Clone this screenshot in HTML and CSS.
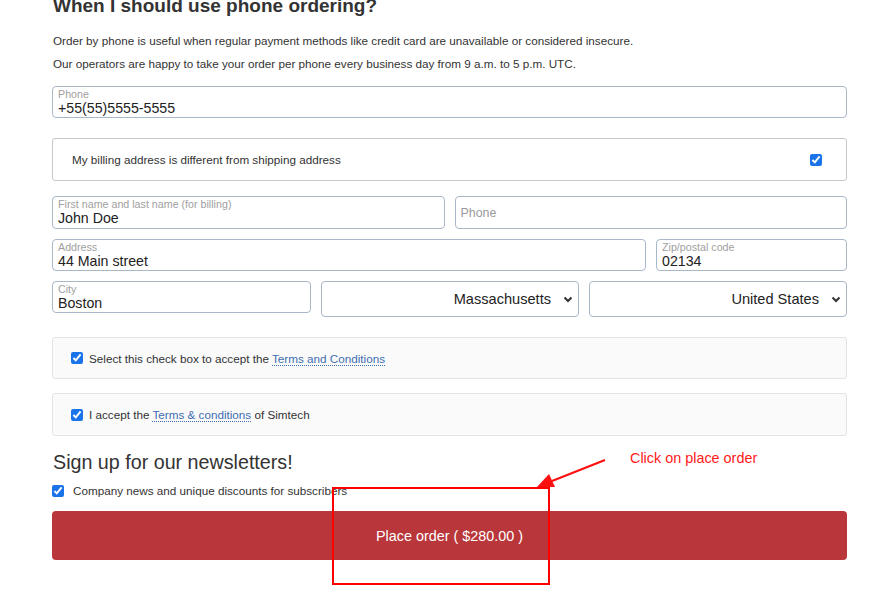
FILE: index.html
```html
<!DOCTYPE html>
<html>
<head>
<meta charset="utf-8">
<link rel="stylesheet" href="styles.css">
</head>
<body>
<div class="page">
  <h2 class="title">When I should use phone ordering?</h2>
  <p class="info first">Order by phone is useful when regular payment methods like credit card are unavailable or considered insecure.</p>
  <p class="info">Our operators are happy to take your order per phone every business day from 9 a.m. to 5 p.m. UTC.</p>

  <div class="field full">
    <span class="flabel">Phone</span>
    <span class="fvalue">+55(55)5555-5555</span>
  </div>

  <div class="billing">
    <span>My billing address is different from shipping address</span>
    <input type="checkbox" class="cb" checked>
  </div>

  <div class="row r1">
    <div class="field grow">
      <span class="flabel">First name and last name (for billing)</span>
      <span class="fvalue">John Doe</span>
    </div>
    <div class="field grow placeholder">
      <span>Phone</span>
    </div>
  </div>

  <div class="row r2">
    <div class="field address">
      <span class="flabel">Address</span>
      <span class="fvalue">44 Main street</span>
    </div>
    <div class="field zip">
      <span class="flabel">Zip/postal code</span>
      <span class="fvalue">02134</span>
    </div>
  </div>

  <div class="row r3">
    <div class="field city">
      <span class="flabel">City</span>
      <span class="fvalue">Boston</span>
    </div>
    <div class="select third">
      <span>Massachusetts</span>
      <svg width="10" height="7" viewBox="0 0 10 7"><path d="M1.5 1.5 L5 5 L8.5 1.5" fill="none" stroke="#333" stroke-width="2"/></svg>
    </div>
    <div class="select third">
      <span>United States</span>
      <svg width="10" height="7" viewBox="0 0 10 7"><path d="M1.5 1.5 L5 5 L8.5 1.5" fill="none" stroke="#333" stroke-width="2"/></svg>
    </div>
  </div>

  <div class="terms t1">
    <input type="checkbox" class="cb" checked>
    <span>Select this check box to accept the <a class="tlink">Terms and Conditions</a></span>
  </div>
  <div class="terms t2">
    <input type="checkbox" class="cb" checked>
    <span>I accept the <a class="tlink">Terms &amp; conditions</a> of Simtech</span>
  </div>

  <h3 class="news">Sign up for our newsletters!</h3>
  <div class="subscribe">
    <input type="checkbox" class="cb" checked>
    <span>Company news and unique discounts for subscribers</span>
  </div>

  <button class="order">Place order ( $280.00 )</button>
</div>

<div class="note">Click on place order</div>
<div class="highlight"></div>
<svg class="arrow" width="891" height="593" viewBox="0 0 891 593">
  <line x1="605" y1="460" x2="552" y2="481" stroke="#ff1010" stroke-width="2.2"/>
  <path d="M537 487 L549 474 L555 487 Z" fill="#ff1010"/>
</svg>
</body>
</html>
```

FILE: styles.css
```css
* { box-sizing: border-box; }
html, body { margin: 0; padding: 0; background: #fff; overflow: hidden; }
body {
  width: 891px;
  height: 593px;
  font-family: "Liberation Sans", Arial, sans-serif;
  color: #333;
  position: relative;
}
.page {
  margin-left: 52px;
  width: 795px;
}
.title {
  margin: -5px 0 0 1px;
  font-size: 19px;
  line-height: 22px;
  font-weight: bold;
  color: #333;
}
.info {
  margin: 8px 0 0 1px;
  font-size: 11.7px;
  line-height: 15px;
  color: #333;
}
.info.first { margin-top: 16px; }

.field {
  border: 1px solid #a9b8c9;
  border-radius: 4px;
  height: 32px;
  padding: 1px 4px 0 5px;
  display: flex;
  flex-direction: column;
  background: #fff;
}
.field.full { margin-top: 15px; }
.flabel {
  font-size: 10.7px;
  line-height: 12px;
  color: #a0a0a0;
}
.fvalue {
  font-size: 14.2px;
  line-height: 16px;
  color: #222;
}
.placeholder {
  justify-content: center;
  padding-top: 0;
  font-size: 12.4px;
  color: #9a9a9a;
}

.billing {
  margin-top: 20px;
  height: 43px;
  border: 1px solid #c8c8c8;
  border-radius: 3px;
  display: flex;
  align-items: center;
  justify-content: space-between;
  padding: 0 24px 0 19px;
  font-size: 11.7px;
  color: #333;
}
.cb {
  width: 12px;
  height: 12px;
  margin: 0;
  accent-color: #1a73e8;
  flex: none;
}

.row { display: flex; gap: 10px; margin-top: 10px; align-items: flex-start; }
.row.r1 { margin-top: 15px; }
.row.r1 .field { height: 33px; }
.grow { flex: 1 1 0; }
.address { flex: 1 1 0; }
.zip { width: 191px; flex: none; }
.city { width: 259px; flex: none; }
.third { flex: 1 1 0; }

.select {
  height: 36px;
  border: 1px solid #a9b8c9;
  border-radius: 4px;
  display: flex;
  align-items: center;
  justify-content: flex-end;
  gap: 12px;
  padding: 0 5px 0 8px;
  font-size: 14.6px;
  color: #222;
}
.select svg { margin-top: 1px; }

.terms {
  margin-top: 20px;
  height: 42px;
  background: #fafafb;
  border: 1px solid #e1e3e8;
  border-radius: 3px;
  display: flex;
  align-items: center;
  padding-left: 18px;
  gap: 6px;
  font-size: 11.7px;
  color: #333;
}
.terms.t2 { margin-top: 14px; height: 43px; }
.tlink {
  color: #3e6eb0;
  text-decoration: none;
  border-bottom: 1px dotted #3e6eb0;
  line-height: 12px;
}

.news {
  margin: 14px 0 0 1px;
  font-size: 19.7px;
  line-height: 24px;
  font-weight: normal;
  color: #333;
}
.subscribe {
  margin-top: 10px;
  display: flex;
  align-items: center;
  gap: 9px;
  font-size: 11.7px;
  line-height: 13px;
  color: #333;
}
.order {
  display: block;
  margin-top: 14px;
  width: 795px;
  height: 49px;
  border: none;
  border-radius: 4px;
  background: #b9363a;
  color: #fff;
  font-family: "Liberation Sans", Arial, sans-serif;
  font-size: 14.4px;
  padding: 0;
  text-align: center;
}

.note {
  position: absolute;
  left: 630px;
  top: 450px;
  font-size: 14.4px;
  line-height: 16px;
  color: #ff1a1a;
}
.highlight {
  position: absolute;
  left: 332px;
  top: 487px;
  width: 218px;
  height: 98px;
  border: 2px solid #ff0000;
}
.arrow {
  position: absolute;
  left: 0;
  top: 0;
  pointer-events: none;
}
```
